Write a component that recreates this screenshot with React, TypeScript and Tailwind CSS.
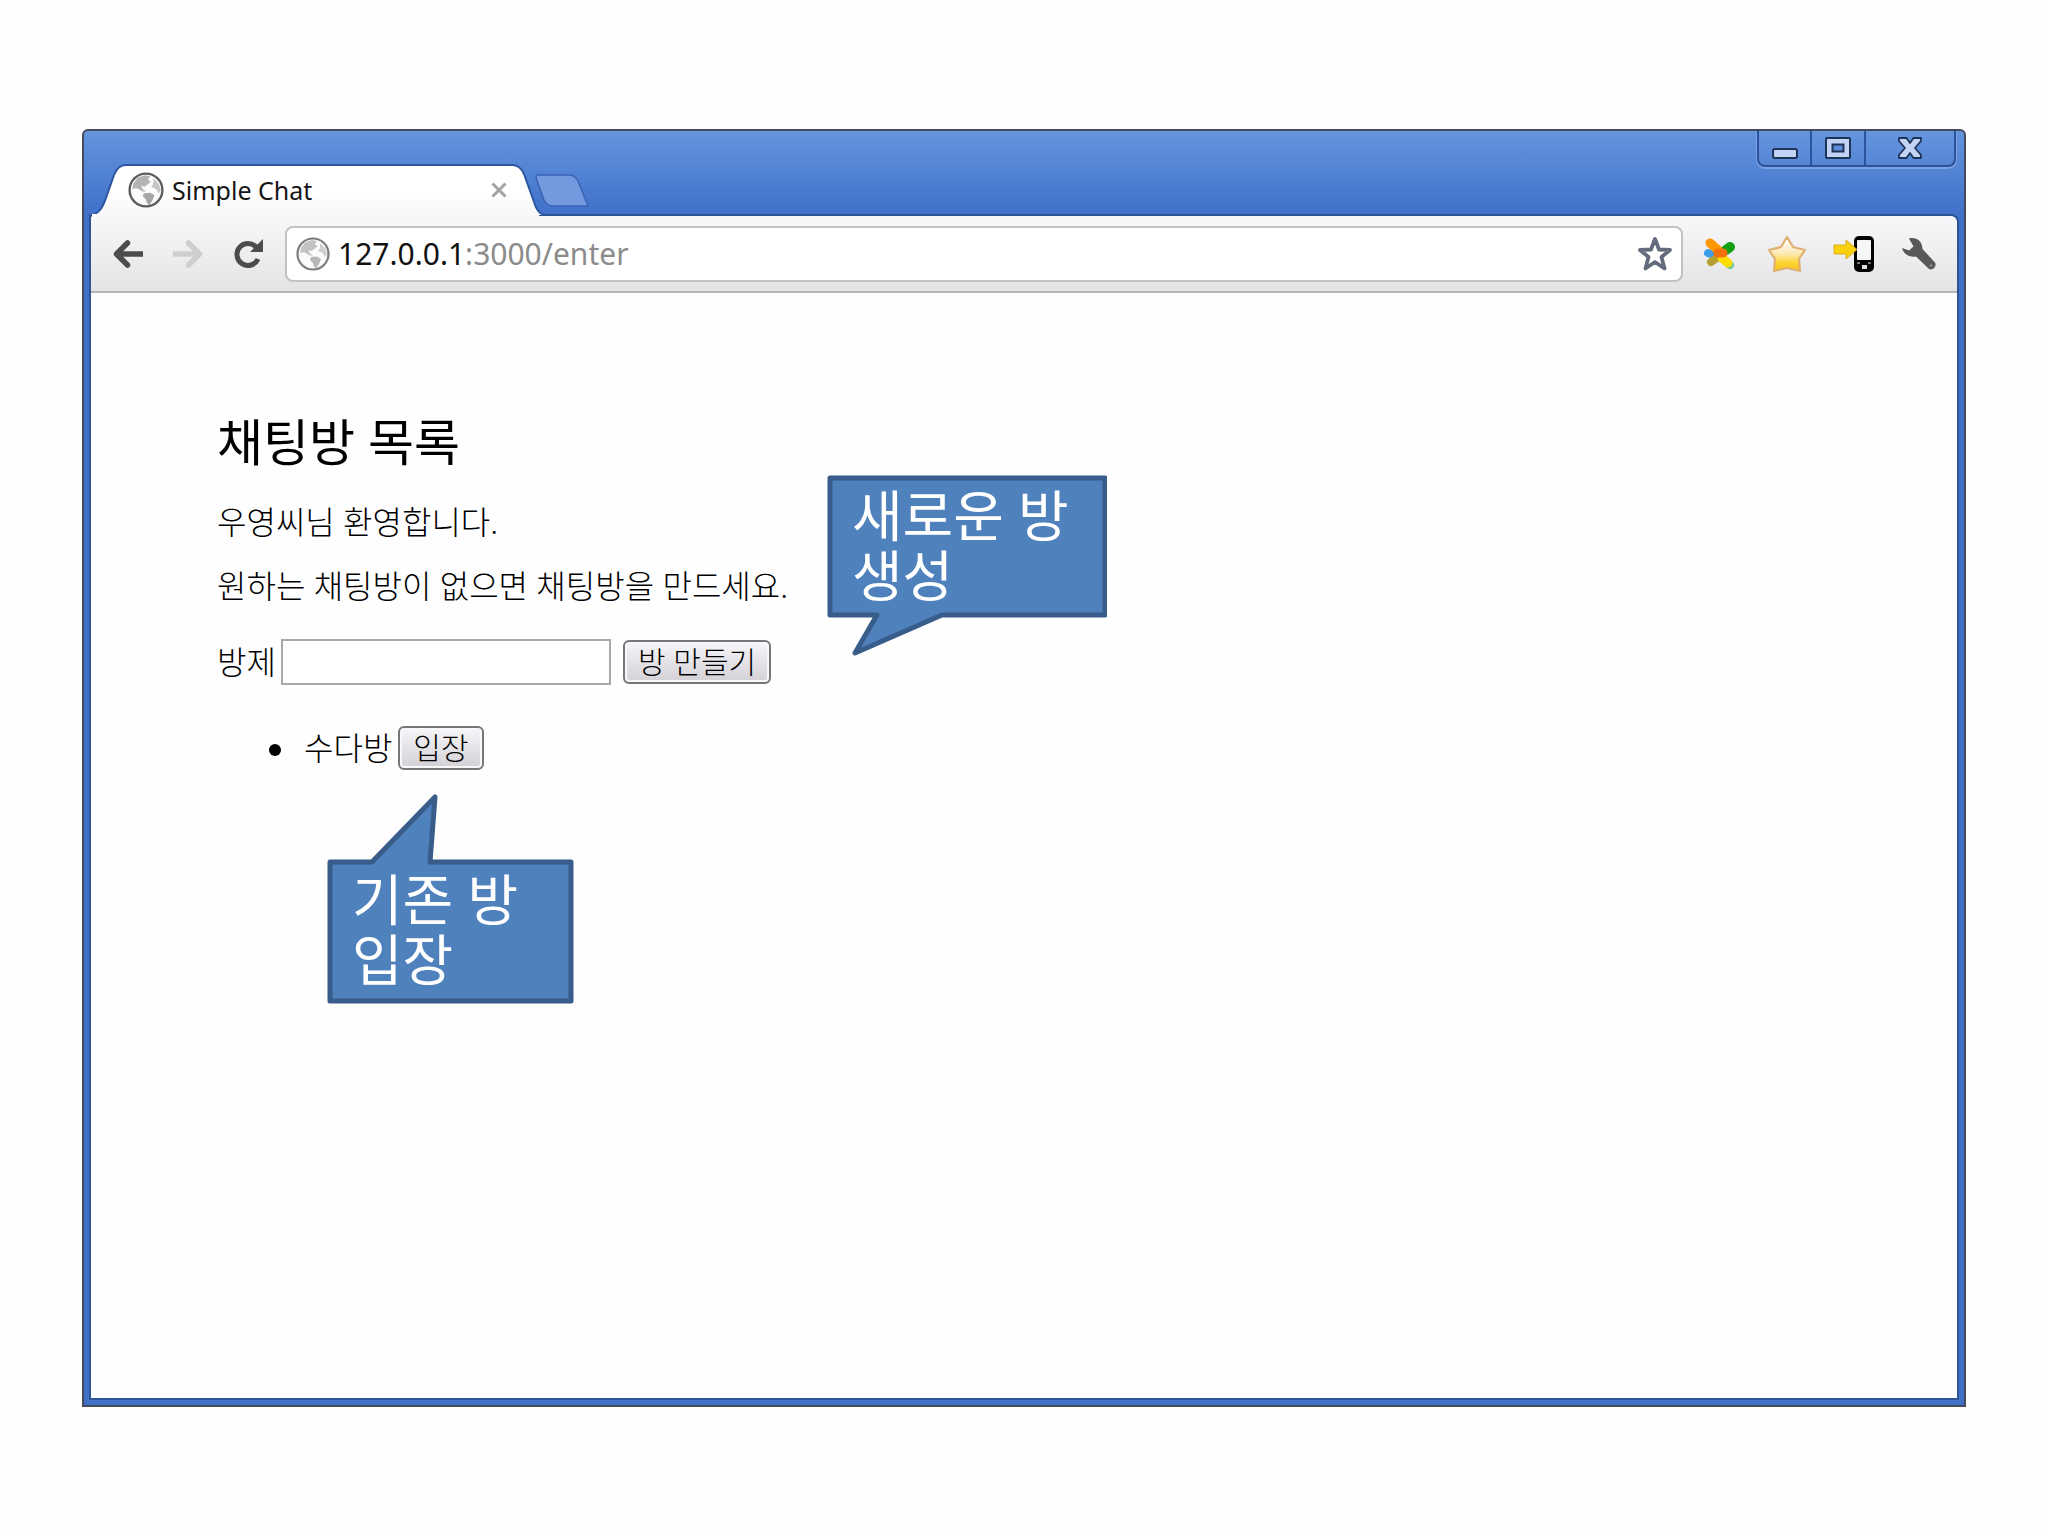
import React from 'react';

interface IconProps {
  className?: string;
}

const GlobeIcon: React.FC<IconProps> = ({ className }) => (
  <svg viewBox="0 0 34 34" className={className} aria-hidden="true">
    <circle cx="17" cy="17" r="15.5" fill="#fbfbfb" stroke="#5c5c5c" strokeWidth="2.2" />
    <path d="M5 11 L9 5.500 L16 3 L21 4 L19 7 L21.500 9.500 L18 12 L15.500 14 L12.500 13 L14 16.500 L17 18.500 L14 18.500 L8 15 L4 16 Z" fill="#b3b3b3" />
    <path d="M15 20 L21 19.500 L25 22 L23 27 L20 31.500 L18 29.500 L17 26 L14 23 Z" fill="#a6a6a6" />
    <path d="M24 6 L29 11 L31 17 L29 20 L26.500 16 L22 14 L24 11 Z" fill="#c4c4c4" />
  </svg>
);

const BackIcon: React.FC<IconProps> = ({ className }) => (
  <svg viewBox="0 0 32 30" className={className} fill="none" stroke="currentColor" strokeWidth="5.5" aria-hidden="true">
    <path d="M4 15 H31" />
    <path d="M15.500 4 L4.500 15 L15.500 26" strokeLinejoin="round" strokeLinecap="round" />
  </svg>
);

const ReloadIcon: React.FC<IconProps> = ({ className }) => (
  <svg viewBox="0 0 32 32" className={className} aria-hidden="true">
    <path d="M24.500 9.500 A11 11 0 1 0 26 21" fill="none" stroke="currentColor" strokeWidth="5" />
    <path d="M31 1 V14 H18 Z" fill="currentColor" />
  </svg>
);

const StarIcon: React.FC<IconProps> = ({ className }) => (
  <svg viewBox="0 0 36 36" className={className} aria-hidden="true">
    <path d="M18 3 L22 13.500 L33 14 L24.500 21 L27.500 32.500 L18 26 L8.500 32.500 L11.500 21 L3 14 L14 13.500 Z" fill="#fff" stroke="#646b7c" strokeWidth="3.8" strokeLinejoin="round" />
  </svg>
);

const ButterflyIcon: React.FC<IconProps> = ({ className }) => (
  <svg viewBox="0 0 34 34" className={className} fill="none" strokeLinecap="round" aria-hidden="true">
    <path d="M5 16 L8 17" stroke="#3f9be8" strokeWidth="8" />
    <path d="M8 25 L15 20" stroke="#b5a132" strokeWidth="8" />
    <path d="M27 10 L23 13" stroke="#12a012" strokeWidth="10" />
    <path d="M27 28 L20 22" stroke="#66c8a0" strokeWidth="8" />
    <path d="M25 26 L19 21" stroke="#ffdc00" strokeWidth="9" />
    <path d="M7 6 L15 13" stroke="#ff9800" strokeWidth="9" />
    <path d="M15 16 L20 16" stroke="#f4700c" strokeWidth="9" />
  </svg>
);

const GoldStarIcon: React.FC<IconProps> = ({ className }) => (
  <svg viewBox="0 0 40 38" className={className} aria-hidden="true">
    <defs>
      <linearGradient id="gold" x1="0" y1="0" x2="0" y2="1">
        <stop offset="0.15" stopColor="#fffaf0" />
        <stop offset="0.5" stopColor="#fce9b0" />
        <stop offset="0.75" stopColor="#fbd432" />
        <stop offset="1" stopColor="#f8c41c" />
      </linearGradient>
    </defs>
    <path d="M20 2 L26 12 L38 15 L32 24 L33 36 L20 33 L7 36 L8 24 L2 15 L14 12 Z" fill="url(#gold)" stroke="#e0b070" strokeWidth="2.2" strokeLinejoin="round" />
  </svg>
);

const SendToPhoneIcon: React.FC<IconProps> = ({ className }) => (
  <svg viewBox="0 0 42 38" className={className} aria-hidden="true">
    <rect x="21" y="1" width="20" height="36" rx="5" fill="#000" />
    <rect x="24" y="5" width="14" height="20" rx="1" fill="#f6f6f6" />
    <rect x="29" y="30" width="5" height="4" fill="#ddd" />
    <path d="M24 28 H27 M35 28 H38" stroke="#999" strokeWidth="1.5" />
    <path d="M1 10 H13 V5 L24 14.500 L13 24 V19 H1 Z" fill="#f9d10c" stroke="#d9ae20" strokeWidth="1" />
  </svg>
);

const WrenchIcon: React.FC<IconProps> = ({ className }) => (
  <svg viewBox="0 0 36 34" className={className} aria-hidden="true">
    <path d="M8 1.500 C14 0 20 3 21 9 L21.500 12 L34 25.500 C36 29 32 34 28 32 L15 19.500 C9 20.500 3 18 1 11 L8 13.500 L12.500 9.500 Z" fill="#585858" />
    <circle cx="30" cy="28.500" r="1.300" fill="#8d8d8d" />
  </svg>
);

const TitleBar = () => (
  <header className="relative z-10 flex h-[85px] items-start justify-between">
    <div className="flex h-full items-end">
      <div className="relative h-[52px] w-[450px]">
        <svg viewBox="0 0 450 52" className="absolute inset-0 h-full w-full overflow-visible" aria-hidden="true">
          <defs>
            <linearGradient id="tab" x1="0" y1="0" x2="0" y2="1">
              <stop offset="0.5" stopColor="#ffffff" />
              <stop offset="1" stopColor="#f8f7f9" />
            </linearGradient>
          </defs>
          <path d="M0 52 C10 48 12 42 15 34 L23 11 Q27 1 35 1 H421 Q429 1 433 10 L443 38 Q446 49 453 51" fill="url(#tab)" stroke="#2b56a0" strokeWidth="2" />
          <path d="M1 51.500 H448" stroke="#f8f7f9" strokeWidth="3" />
        </svg>
        <div className="relative flex h-full items-center pr-[32px] pl-[37px]">
          <GlobeIcon className="size-[36px]" />
          <span className="ml-2 flex-1 text-[25px] leading-8 text-[#151515]">Simple Chat</span>
          <button type="button" aria-label="Close tab" className="flex size-5 items-center justify-center text-[#a3a3a3]">
            <svg viewBox="0 0 16 16" className="size-4" stroke="currentColor" strokeWidth="3" aria-hidden="true">
              <path d="M1.500 1.500 L14.500 14.500 M14.500 1.500 L1.500 14.500" />
            </svg>
          </button>
        </div>
      </div>
      <button type="button" aria-label="New tab" className="mb-2 -ml-1.5">
        <svg viewBox="0 0 54 34" className="h-[34px] w-[54px]" aria-hidden="true">
          <path d="M2 1 H34 Q40 1 43 7 L53 32 H18 Q12 32 9 26 L1 4 Z" fill="#7399de" stroke="#3a63b5" strokeWidth="1.500" />
        </svg>
      </button>
    </div>
    <div className="mr-px flex h-9 rounded-b-lg border-2 border-t-0 border-[#2b529b] shadow-[0_1px_0_1px_#7ba2e4]">
      <button type="button" aria-label="Minimize" className="flex w-[53px] items-center justify-center border-r-2 border-[#2b529b] pt-3">
        <svg viewBox="0 0 26 12" className="h-3 w-[26px]" aria-hidden="true">
          <rect x="1" y="1" width="24" height="9" rx="2" fill="#c3d3f3" stroke="#1e3358" strokeWidth="2" />
        </svg>
      </button>
      <button type="button" aria-label="Maximize" className="flex w-[54px] items-center justify-center border-r-2 border-[#2b529b]">
        <svg viewBox="0 0 26 22" className="h-[22px] w-[26px]" aria-hidden="true">
          <rect x="1" y="1" width="24" height="20" rx="1" fill="#c3d3f3" stroke="#1e3358" strokeWidth="2" />
          <rect x="7.500" y="7.500" width="11" height="7" fill="#5f8cd8" stroke="#1e3358" strokeWidth="2" />
        </svg>
      </button>
      <button type="button" aria-label="Close" className="flex w-[88px] items-center justify-center">
        <svg viewBox="0 0 24 22" className="h-[22px] w-6" aria-hidden="true">
          <path d="M1 1 H8.500 L12 6 L15.500 1 H23 V4 L17 11 L23 18 V21 H15.500 L12 16 L8.500 21 H1 V18 L7 11 L1 4 Z" fill="#c3d3f3" stroke="#1e3358" strokeWidth="1.800" strokeLinejoin="round" />
        </svg>
      </button>
    </div>
  </header>
);

const Toolbar = () => (
  <nav className="flex h-[77px] items-center rounded-tr-md border-b-2 border-[#b5b4b8] bg-gradient-to-b from-[#f8f7f9] to-[#e4e3e5] pr-5 pl-[21px]">
    <div className="flex items-center gap-[28px] text-[#4c4c4c]">
      <button type="button" aria-label="Back">
        <BackIcon className="h-[30px] w-8" />
      </button>
      <button type="button" aria-label="Forward" className="text-[#cfcfcf]">
        <BackIcon className="h-[30px] w-8 rotate-180" />
      </button>
      <button type="button" aria-label="Reload">
        <ReloadIcon className="size-8" />
      </button>
    </div>
    <div className="ml-[21px] flex h-14 flex-1 items-center rounded-lg border-2 border-[#c2c1c4] bg-white pr-2 pl-[9px]">
      <GlobeIcon className="size-[34px] opacity-80" />
      <a href="#enter" className="ml-2 flex-1 text-[30px] leading-10 text-[#8b8b8b]">
        <span className="text-[#111]">127.0.0.1</span>:3000/enter
      </a>
      <button type="button" aria-label="Bookmark this page">
        <StarIcon className="size-9" />
      </button>
    </div>
    <div className="ml-5 flex items-center gap-[26px]">
      <button type="button" aria-label="Butterfly extension" className="mr-1">
        <ButterflyIcon className="size-[34px]" />
      </button>
      <button type="button" aria-label="Favorites">
        <GoldStarIcon className="h-[38px] w-10" />
      </button>
      <button type="button" aria-label="Send to phone">
        <SendToPhoneIcon className="h-[38px] w-[42px]" />
      </button>
      <button type="button" aria-label="Settings">
        <WrenchIcon className="h-[34px] w-9" />
      </button>
    </div>
  </nav>
);

interface FormButtonProps {
  children: React.ReactNode;
}

const FormButton: React.FC<FormButtonProps> = ({ children }) => (
  <button
    type="button"
    className="h-11 rounded-md border-2 border-[#77767b] bg-gradient-to-b from-[#f6f5f8] to-[#d3d1d6] px-[13px] text-[30px] leading-9 whitespace-nowrap shadow-[inset_0_0_0_2px_#f8f8fa]"
  >
    {children}
  </button>
);

const ChatRooms = () => (
  <section className="px-[126px] pt-[119px] leading-[48px] text-black">
    <h1 className="text-[50px] leading-[60px] font-normal">채팅방 목록</h1>
    <p className="mt-[26px] text-[32px] font-light">우영씨님 환영합니다.</p>
    <p className="mt-4 text-[32px] font-light">원하는 채팅방이 없으면 채팅방을 만드세요.</p>
    <form className="mt-[28px] flex items-center text-[32px] font-light">
      <label htmlFor="room">방제</label>
      <input id="room" type="text" className="mr-3 ml-[5px] h-[46px] w-[330px] border-2 border-[#a9a9a9] bg-white px-2" />
      <FormButton>방 만들기</FormButton>
    </form>
    <ul className="mt-[38px] pl-[52px] text-[32px] font-light">
      <li className="flex items-center">
        <span className="mt-1 mr-[23px] size-3 rounded-full bg-black" />
        <span className="mr-[6px]">수다방</span>
        <FormButton>입장</FormButton>
      </li>
    </ul>
  </section>
);

const NewRoomCallout = () => (
  <aside className="absolute top-[182px] left-[736px] h-[182px] w-[280px]">
    <svg viewBox="0 0 280 182" className="absolute inset-0 h-full w-full" aria-hidden="true">
      <path d="M3 3 H278 V140 H115 L28 178 L50 140 H3 Z" fill="#4f81bd" stroke="#385d8a" strokeWidth="5" strokeLinejoin="round" />
    </svg>
    <p className="relative pt-[10px] pl-[25px] text-[55px] leading-[60px] text-white">
      새로운 방
      <br />
      생성
    </p>
  </aside>
);

const EnterRoomCallout = () => (
  <aside className="absolute top-[501px] left-[236px] h-[210px] w-[247px]">
    <svg viewBox="0 0 247 210" className="absolute inset-0 h-full w-full" aria-hidden="true">
      <path d="M3 68 H45 L108 3 L103 68 H244 V207 H3 Z" fill="#4f81bd" stroke="#385d8a" strokeWidth="5" strokeLinejoin="round" />
    </svg>
    <p className="relative pt-[75px] pl-[25px] text-[55px] leading-[60px] text-white">
      기존 방
      <br />
      입장
    </p>
  </aside>
);

const App = () => {
  return (
    <div className="flex min-h-screen flex-col bg-[#fefefe] px-[82px] py-[129px] font-['Noto_Sans','Noto_Sans_CJK_KR',sans-serif]">
      <div className="flex flex-1 flex-col rounded-t-md border-2 border-[#454b5c] bg-[#4070c4] bg-gradient-to-b from-[#6595de] to-[#4070c8] to-[84px] px-[7px] pb-[7px]">
        <TitleBar />
        <div className="flex flex-1 flex-col rounded-tr-md shadow-[0_0_0_2px_#2d5596]">
          <Toolbar />
          <main className="relative flex-1 bg-[#fefefe]">
            <ChatRooms />
            <NewRoomCallout />
            <EnterRoomCallout />
          </main>
        </div>
      </div>
    </div>
  );
};

export default App;
